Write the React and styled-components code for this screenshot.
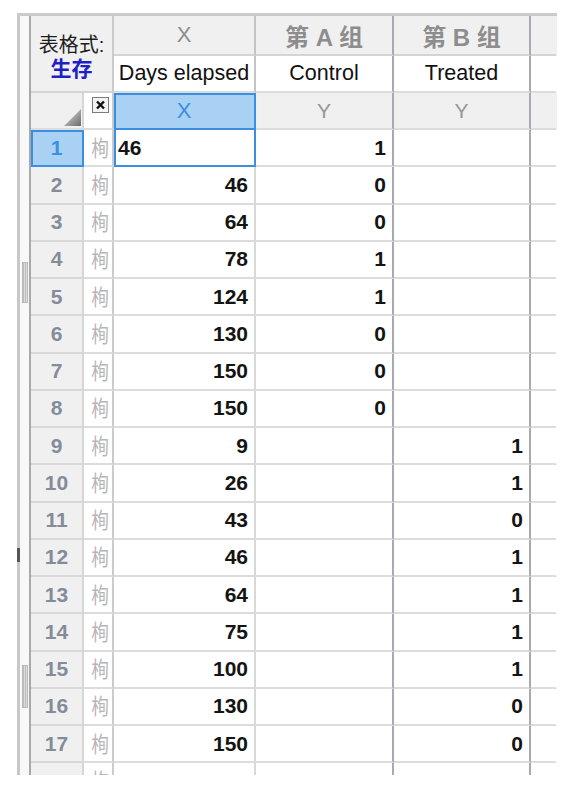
import styled, { createGlobalStyle } from 'styled-components';

const GlobalStyle = createGlobalStyle`
  html, body {
    margin: 0;
    padding: 0;
    background: #fff;
  }
  body {
    font-family: "Liberation Sans", "Noto Sans CJK SC", sans-serif;
  }
`;

const BLUE = '#3c8fe0';
const SEL_BG = '#a9d1f3';
const ROW_LINE = '#dcdcdc';

// right border colour of each column: row header, row title, X, A, B, filler
const LINES = ['#d6d6d6', '#cbcbcb', '#d8d8d8', '#a9a9b1', '#a9a9b1', 'transparent'];
const HEAD_LINES = ['#d6d6d6', '#cbcbcb', '#c4c4c4', '#a9a9b1', '#a9a9b1', 'transparent'];

const Page = styled.div`
  width: 573px;
  height: 792px;
  box-sizing: border-box;
  padding: 13px 0 0 17px;
  overflow: hidden;
`;

const Sheet = styled.div`
  width: 540px;
  height: 762px;
  box-sizing: border-box;
  border-top: 3px solid #cbcbcb;
  display: flex;
  overflow: hidden;
`;

const Gutter = styled.div`
  width: 14px;
  flex: none;
  display: flex;
`;

const Rail = styled.div`
  width: 3px;
  background: #c8c8c8;
  display: flex;
  flex-direction: column;
`;

const RailMark = styled.div`
  margin-top: 532px;
  height: 14px;
  background: #555;
`;

const Track = styled.div`
  width: 9px;
  background: #f8f8f8;
  border-right: 2px solid #a9a9a9;
  display: flex;
  flex-direction: column;
`;

const Thumb = styled.div`
  margin: ${p => p.$top}px 0 0 2px;
  width: 6px;
  height: ${p => p.$height}px;
  box-sizing: border-box;
  border: 1px solid #b9b9b9;
  background: repeating-linear-gradient(90deg, #bcbcbc 0 1px, #dcdcdc 1px 2px);
`;

const Grid = styled.div`
  display: grid;
  grid-template-columns: 53px 30px 142px 138px 137px 26px;
  grid-template-rows: 40px 37px 37px repeat(18, 37.25px);
  align-content: start;
`;

const Cell = styled.div`
  box-sizing: border-box;
  display: flex;
  align-items: center;
  overflow: hidden;
  border-right: 2px solid ${p => p.$line};
  border-bottom: 2px solid ${ROW_LINE};
  white-space: nowrap;
`;

const Corner = styled(Cell)`
  grid-column: span 2;
  grid-row: span 2;
  background: #f0f0f0;
  flex-direction: column;
  justify-content: center;
  padding-top: 6px;
  border-bottom-color: #d4d4d4;
`;

const FormatLabel = styled.div`
  font-size: 20px;
  line-height: 23px;
  color: #1e1e1e;
`;

const FormatValue = styled.div`
  font-size: 21px;
  line-height: 23px;
  font-weight: bold;
  color: #1f1fc6;
`;

const GroupHead = styled(Cell)`
  background: #f0f0f0;
  justify-content: center;
  color: #8d8d8d;
  font-size: ${p => (p.$cjk ? 24 : 22)}px;
  font-weight: ${p => (p.$cjk ? 'bold' : 'normal')};
  border-bottom-color: #d4d4d4;
`;

const TitleCell = styled(Cell)`
  background: #fff;
  justify-content: center;
  color: #111;
  font-size: 21.5px;
`;

const KindCell = styled(Cell)`
  background: ${p => (p.$selected ? SEL_BG : '#f0f0f0')};
  justify-content: center;
  color: ${p => (p.$selected ? BLUE : '#979797')};
  font-size: ${p => (p.$selected ? 22 : 21)}px;
  ${p => p.$selected && `
    border-right-color: ${BLUE};
    border-bottom-color: ${BLUE};
    box-shadow: inset 2px 2px 0 0 ${BLUE};
  `}
`;

const CornerTool = styled(Cell)`
  background: #f0f0f0;
  align-items: flex-end;
  justify-content: flex-end;
  padding: 0 0 1px 0;
`;

const CheckCell = styled(Cell)`
  background: #fff;
  align-items: flex-start;
  justify-content: center;
  padding: 4px 0 0 5px;
`;

const RowHead = styled(Cell)`
  background: ${p => (p.$selected ? SEL_BG : '#f0f0f0')};
  justify-content: center;
  color: ${p => (p.$selected ? BLUE : '#858c99')};
  font-size: 21px;
  font-weight: bold;
  border-bottom-color: #d8d8d8;
  ${p => p.$selected && `
    border-right-color: ${BLUE};
    border-bottom-color: ${BLUE};
    box-shadow: inset 2px 2px 0 0 ${BLUE};
  `}
`;

const MarkCell = styled(Cell)`
  background: #fff;
  justify-content: center;
  padding: 0 0 4px 5px;
  color: #b6b6b6;
  font-size: 22px;
`;

const Glyph = styled.span`
  display: inline-block;
  transform: scaleX(0.8);
`;

const ValueCell = styled(Cell)`
  background: #fff;
  justify-content: ${p => (p.$editing ? 'flex-start' : 'flex-end')};
  padding: ${p => (p.$editing ? '0 0 0 4px' : '0 6px 0 0')};
  color: #141414;
  font-size: 21px;
  font-weight: bold;
  ${p => p.$editing && `
    border-right-color: ${BLUE};
    border-bottom-color: ${BLUE};
    box-shadow: inset 2px 0 0 0 ${BLUE};
  `}
`;

const xs = [46, 46, 64, 78, 124, 130, 150, 150, 9, 26, 43, 46, 64, 75, 100, 130, 150];
const as = [1, 0, 0, 1, 1, 0, 0, 0];
const bs = [null, null, null, null, null, null, null, null, 1, 1, 0, 1, 1, 1, 1, 0, 0];

const rows = xs.map((x, i) => ({ n: i + 1, x, a: as[i] ?? null, b: bs[i] }));
rows.push({ n: '', x: null, a: null, b: null });

const SortTriangle = () => (
  <svg width="19" height="19" viewBox="0 0 19 19">
    <defs>
      <linearGradient id="tri" x1="0" y1="0" x2="1" y2="1">
        <stop offset="0" stopColor="#e4e4e4" />
        <stop offset="1" stopColor="#6a6a6a" />
      </linearGradient>
    </defs>
    <polygon points="18,1 18,18 1,18" fill="url(#tri)" />
  </svg>
);

const CloseBox = () => (
  <svg width="17" height="16" viewBox="0 0 17 16">
    <rect x="0.5" y="0.5" width="16" height="15" fill="#f4f4f4" stroke="#7c7c7c" />
    <path d="M5 4.5 L12 11.5 M12 4.5 L5 11.5" stroke="#111" strokeWidth="2.4" />
  </svg>
);

export default function App() {
  return (
    <Page>
      <GlobalStyle />
      <Sheet>
        <Gutter>
          <Rail>
            <RailMark />
          </Rail>
          <Track>
            <Thumb $top={246} $height={41} />
            <Thumb $top={362} $height={43} />
          </Track>
        </Gutter>
        <Grid>
          <Corner $line={HEAD_LINES[1]}>
            <FormatLabel>表格式:</FormatLabel>
            <FormatValue>生存</FormatValue>
          </Corner>
          <GroupHead $line={HEAD_LINES[2]}>X</GroupHead>
          <GroupHead $line={HEAD_LINES[3]} $cjk>第 A 组</GroupHead>
          <GroupHead $line={HEAD_LINES[4]} $cjk>第 B 组</GroupHead>
          <GroupHead $line={HEAD_LINES[5]} />

          <TitleCell $line={HEAD_LINES[2]}>Days elapsed</TitleCell>
          <TitleCell $line={HEAD_LINES[3]}>Control</TitleCell>
          <TitleCell $line={HEAD_LINES[4]}>Treated</TitleCell>
          <TitleCell $line={HEAD_LINES[5]} />

          <CornerTool $line={HEAD_LINES[0]}>
            <SortTriangle />
          </CornerTool>
          <CheckCell $line={HEAD_LINES[1]}>
            <CloseBox />
          </CheckCell>
          <KindCell $line={HEAD_LINES[2]} $selected>X</KindCell>
          <KindCell $line={HEAD_LINES[3]}>Y</KindCell>
          <KindCell $line={HEAD_LINES[4]}>Y</KindCell>
          <KindCell $line={HEAD_LINES[5]} />

          {rows.map((r, i) => [
            <RowHead key={`h${i}`} $line={LINES[0]} $selected={i === 0}>{r.n}</RowHead>,
            <MarkCell key={`m${i}`} $line={LINES[1]}><Glyph>栒</Glyph></MarkCell>,
            <ValueCell key={`x${i}`} $line={LINES[2]} $editing={i === 0}>{r.x}</ValueCell>,
            <ValueCell key={`a${i}`} $line={LINES[3]}>{r.a}</ValueCell>,
            <ValueCell key={`b${i}`} $line={LINES[4]}>{r.b}</ValueCell>,
            <ValueCell key={`f${i}`} $line={LINES[5]} />,
          ])}
        </Grid>
      </Sheet>
    </Page>
  );
}
